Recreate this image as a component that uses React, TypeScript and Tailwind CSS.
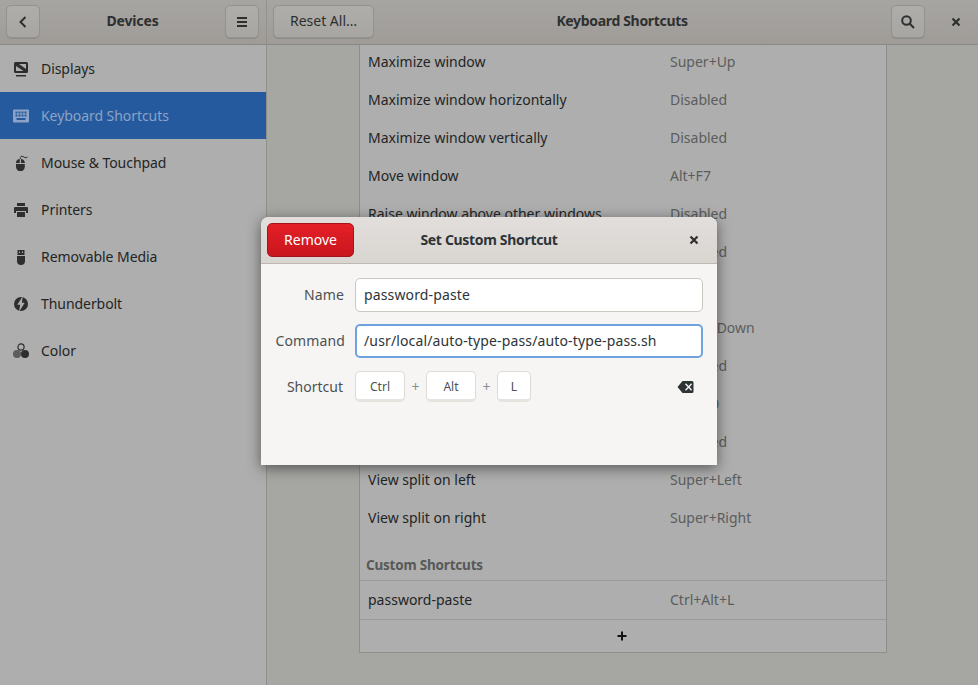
import React from "react";

const font = { fontFamily: '"Noto Sans", sans-serif' };

function Display() {
  return (
    <svg width="16" height="16" viewBox="0 0 16 16" fill="#2e2e2e">
      <path d="M2.500 1h11A1.500 1.500 0 0 1 15 2.500v8a1.500 1.500 0 0 1-1.500 1.500h-11A1.500 1.500 0 0 1 1 10.500v-8A1.500 1.500 0 0 1 2.500 1zM3 3v7h10V3z" fillRule="evenodd" />
      <path d="M3 3h3l7 5v2h-2.500L3 5z" />
      <path d="M3 14h10v1.500H3z" />
    </svg>
  );
}
function Keyboard({ c }: { c: string }) {
  return (
    <svg width="16" height="16" viewBox="0 0 16 16" fill={c}>
      <path fillRule="evenodd" d="M1 1.500h14a1 1 0 0 1 1 1v11a1 1 0 0 1-1 1H1a1 1 0 0 1-1-1v-11a1 1 0 0 1 1-1zM2.500 3.500v2h2v-2zM5.500 3.500v2h2v-2zM8.500 3.500v2h2v-2zM11.500 3.500v2h2v-2zM2.500 6.500v2h2v-2zM5.500 6.500v2h2v-2zM8.500 6.500v2h2v-2zM11.500 6.500v2h2v-2zM3.500 10v2h9v-2z" />
    </svg>
  );
}
function Mouse() {
  return (
    <svg width="16" height="16" viewBox="0 0 16 16" fill="#2e2e2e">
      <path d="M3 7.500a4 4 0 0 1 3.800-3.500v4H3zM8 4a4 4 0 0 1 3.800 3.500V8H8zM3 9h8.800v2.800a4.400 4.400 0 0 1-8.800 0z" />
      <path d="M7.400 4C7 1.500 8.500 .7 10 1.500s2.500 2 4.500 .5" fill="none" stroke="#2e2e2e" strokeWidth="1" />
    </svg>
  );
}
function Printer() {
  return (
    <svg width="16" height="16" viewBox="0 0 16 16" fill="#2e2e2e">
      <path d="M4 1h8v3H4zM2 5h12a1 1 0 0 1 1 1v5h-2V9H3v2H1V6a1 1 0 0 1 1-1zM4 10h8v5H4z" />
    </svg>
  );
}
function Usb() {
  return (
    <svg width="16" height="16" viewBox="0 0 16 16" fill="#2e2e2e">
      <path fillRule="evenodd" d="M4.500 1h7v5h-7zM6 2.500v1.500h1V2.500zM9 2.500v1.500h1V2.500z" />
      <path d="M4 7h8v5a4 4 0 0 1-8 0z" />
    </svg>
  );
}
function Bolt() {
  return (
    <svg width="16" height="16" viewBox="0 0 16 16">
      <circle cx="8" cy="8" r="7" fill="#2e2e2e" />
      <path d="M9.800 0L4.300 8.800h2.900L6 16l5.700-9.300H8.900z" fill="#aeaeae" />
      <path d="M8.600 3.500L6 7.700h2.600L7.500 12.500l2.500-4.700H7.700z" fill="#aeaeae" />
    </svg>
  );
}
function ColorIcon() {
  return (
    <svg width="16" height="16" viewBox="0 0 16 16">
      <circle cx="8" cy="4" r="3.100" fill="none" stroke="#2e2e2e" strokeWidth="1.200" />
      <circle cx="4" cy="11" r="4" fill="#5c5c5c" />
      <circle cx="12" cy="11" r="4" fill="#2e2e2e" />
    </svg>
  );
}
function Cross() {
  return (
    <svg width="16" height="16" viewBox="0 0 16 16">
      <path d="M4.500 4.500l7 7M11.500 4.500l-7 7" stroke="#2e3030" strokeWidth="2.200" fill="none" />
    </svg>
  );
}

const navItems = [
  { label: "Displays", icon: <Display /> },
  { label: "Keyboard Shortcuts", icon: <Keyboard c="#8ba3c6" />, active: true },
  { label: "Mouse & Touchpad", icon: <Mouse /> },
  { label: "Printers", icon: <Printer /> },
  { label: "Removable Media", icon: <Usb /> },
  { label: "Thunderbolt", icon: <Bolt /> },
  { label: "Color", icon: <ColorIcon /> },
];

const rows = [
  ["Maximize window", "Super+Up"],
  ["Maximize window horizontally", "Disabled"],
  ["Maximize window vertically", "Disabled"],
  ["Move window", "Alt+F7"],
  ["Raise window above other windows", "Disabled"],
  ["Raise window if covered", "Disabled"],
  ["Resize window", "Alt+F8"],
  ["Restore window", "Super+Down"],
  ["Toggle fullscreen mode", "Disabled"],
  ["Toggle maximization state", "Alt+F10"],
  ["Toggle window on all workspaces", "Disabled"],
  ["View split on left", "Super+Left"],
  ["View split on right", "Super+Right"],
];

function HeaderButton({ children, className = "" }: { children: React.ReactNode; className?: string }) {
  return (
    <div className={`h-[33px] flex items-center justify-center rounded-[5px] border border-[#94928e] bg-gradient-to-b from-[#afadaa] to-[#a8a6a3] shadow-[0_1px_0_#8f8d89] text-[#2e3030] ${className}`}>
      {children}
    </div>
  );
}

function Key({ children, w }: { children: React.ReactNode; w: string }) {
  return (
    <div className={`${w} h-[31px] flex items-center justify-center pt-[2px] bg-white rounded-[5px] border border-[#dedbd6] border-b-[3px] border-b-[#e6e3df] text-[12px] text-[#4c5152]`}>
      {children}
    </div>
  );
}

export default function App() {
  return (
    <div className="relative w-[978px] h-[685px] overflow-hidden bg-[#a6a6a3] text-[14px] text-[#232525]" style={font}>
      <div className="h-[45px] flex bg-gradient-to-b from-[#a7a5a2] to-[#9f9c98] border-b border-[#8a8884]">
        <div className="w-[267px] shrink-0 flex items-center pl-[6px] pr-[7px] pb-[1px] border-r border-[#94928e]">
          <HeaderButton className="w-[34px]">
            <svg width="16" height="16" viewBox="0 0 16 16"><path d="M10.500 3L5.500 8l5 5" stroke="#2e3030" strokeWidth="2" fill="none" /></svg>
          </HeaderButton>
          <div className="flex-1 text-center font-bold text-[#2e3030] pb-[3px] tracking-[-0.15px]">Devices</div>
          <HeaderButton className="w-[34px]">
            <svg width="16" height="16" viewBox="0 0 16 16" fill="#2e3030"><path d="M3 3h10v2H3zM3 7h10v2H3zM3 11h10v2H3z" /></svg>
          </HeaderButton>
        </div>
        <div className="flex-1 flex items-center pl-[6px] pb-[1px]">
          <HeaderButton className="w-[101px] pb-[2px]">Reset All…</HeaderButton>
          <div className="flex-1 text-center font-bold text-[#2e3030] pr-[21px] pb-[3px] tracking-[-0.33px]">Keyboard Shortcuts</div>
          <HeaderButton className="w-[34px]">
            <svg width="16" height="16" viewBox="0 0 16 16"><circle cx="6.500" cy="6.500" r="4.300" stroke="#2e3030" strokeWidth="2" fill="none" /><path d="M9.800 9.800l4.200 4.200" stroke="#2e3030" strokeWidth="2" /></svg>
          </HeaderButton>
          <div className="w-[53px] flex justify-center pl-[9px]"><Cross /></div>
        </div>
      </div>
      <div className="flex h-[640px]">
        <div className="w-[267px] shrink-0 bg-[#aeaeae] border-r border-[#8f8f8c]">
          {navItems.map((n) => (
            <div key={n.label} className={`h-[47px] flex items-center pl-[13px] gap-[12px] tracking-[-0.06px] ${n.active ? "bg-[#265a9e] text-[#8ba3c6] w-[266px]" : ""}`}>
              {n.icon}
              <span>{n.label}</span>
            </div>
          ))}
        </div>
        <div className="flex-1 overflow-hidden pl-[92px] pr-[91px]">
          <div className="h-[608px] bg-[#aeaeae] border-x border-b border-[#8f8f8a] overflow-hidden">
            <div className="-mt-[3px]">
              {rows.map(([a, b]) => (
                <div key={a} className="h-[38px] flex items-center pl-[8px]">
                  <span className="w-[302px] shrink-0">{a}</span>
                  <span className="text-[#5b5d5d]">{b}</span>
                </div>
              ))}
            </div>
            <div className="h-[28px] flex items-end pl-[6px] font-bold text-[#575958] pb-[5px] mt-[16px] text-[13.5px] tracking-[-0.2px]">Custom Shortcuts</div>
            <div className="h-[39px] flex items-center pl-[8px] pb-[2px] border-t border-[#9a9a97]">
              <span className="w-[302px] shrink-0">password-paste</span>
              <span className="text-[#5b5d5d]">Ctrl+Alt+L</span>
            </div>
            <div className="h-[33px] flex items-center justify-center pr-[2px] border-t border-[#9a9a97]">
              <svg width="16" height="16" viewBox="0 0 16 16"><path d="M3.500 8h9M8 3.500v9" stroke="#111" strokeWidth="2" /></svg>
            </div>
          </div>
        </div>
      </div>

      <div className="absolute left-[261px] top-[217px] w-[456px] h-[248px] rounded-t-[8px] bg-[#f6f5f4] shadow-[0_3px_14px_rgba(0,0,0,0.5)] flex flex-col overflow-hidden">
        <div className="h-[47px] shrink-0 flex items-center pl-[6px] pr-[15px] bg-gradient-to-b from-[#e1dedb] to-[#d9d6d2] border-b border-[#bfb8b1]">
          <div className="w-[87px] h-[34px] flex items-center justify-center rounded-[5px] bg-gradient-to-b from-[#e41f27] to-[#c9161e] border border-[#a4141a] text-white pb-[2px]">Remove</div>
          <div className="flex-1 text-center font-bold text-[#2e3436] pr-[62px] pb-[2px] tracking-[-0.32px]">Set Custom Shortcut</div>
          <Cross />
        </div>
        <div className="flex-1 pl-[94px] pr-[14px] pt-[14px] flex flex-col">
          <div className="relative h-[34px] flex items-center px-[8px] pb-[2px] bg-white rounded-[5px] border border-[#cdc7c2] text-[#2e3436] tracking-[0.14px]">
            <span className="absolute -left-[78px] w-[66px] text-right text-[#4c5152]">Name</span>
            password-paste
          </div>
          <div className="relative mt-[12px] h-[34px] flex items-center px-[7px] pb-[2px] bg-white rounded-[5px] border-2 border-[#6ea3e0] text-[#2e3436] tracking-[0.14px]">
            <span className="absolute -left-[84px] w-[72px] text-right text-[#4c5152]">Command</span>
            /usr/local/auto-type-pass/auto-type-pass.sh
          </div>
          <div className="relative mt-[13px] h-[31px] flex items-center text-[#4c5152]">
            <span className="absolute -left-[78px] w-[66px] text-right">Shortcut</span>
            <Key w="w-[50px]">Ctrl</Key>
            <span className="w-[21px] text-center text-[#8b8e8f]">+</span>
            <Key w="w-[50px]">Alt</Key>
            <span className="w-[21px] text-center text-[#8b8e8f]">+</span>
            <Key w="w-[34px]">L</Key>
            <div className="flex-1" />
            <svg className="mr-[9px]" width="17" height="16" viewBox="0 0 17 16" fill="#2e3436">
              <path fillRule="evenodd" d="M5.500 2H15a1.500 1.500 0 0 1 1.500 1.500v9A1.500 1.500 0 0 1 15 14H5.500L.5 8zM8 5.300L10.700 8 8 10.700l1 1 2.700-2.700 2.300 2.700 1-1L12.700 8 15 5.300l-1-1-2.300 2.700L9 4.300z" />
            </svg>
          </div>
        </div>
      </div>
    </div>
  );
}
